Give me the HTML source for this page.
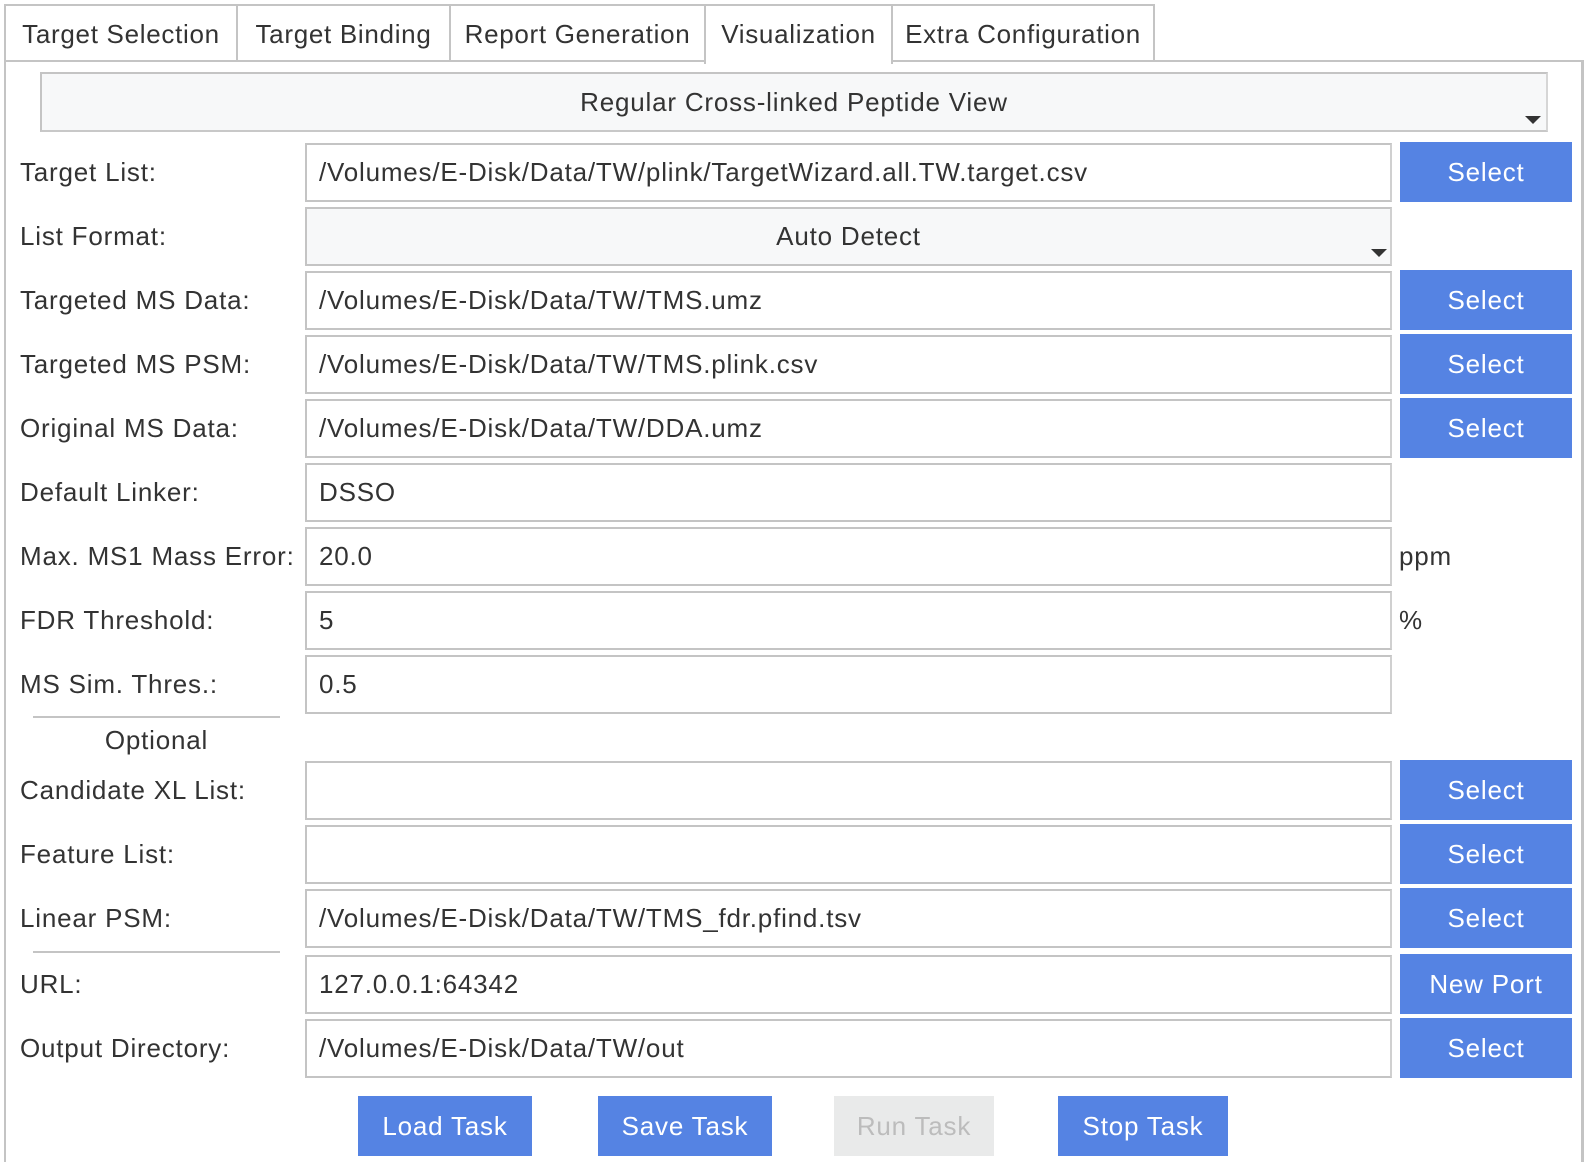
<!DOCTYPE html>
<html style="width:1592px;height:1162px;overflow:hidden"><head><meta charset="utf-8"><style>
*{box-sizing:border-box;margin:0;padding:0}
body{width:1592px;height:1162px;background:#fff;position:relative;overflow:hidden;font-family:"Liberation Sans",Arial,sans-serif;color:#333;font-size:26px;letter-spacing:0.8px}
.a{position:absolute}
.tab{position:absolute;top:4px;height:58px;border:2px solid #c4c4c4;background:#fff;line-height:56px;text-align:center;font-size:26px;letter-spacing:0.7px}
.panel{position:absolute;left:4px;top:60px;width:1580px;height:1102px;border:2px solid #c4c4c4;border-right-width:3px;border-bottom:none}
.lbl{position:absolute;left:20px;height:58px;line-height:58px;white-space:nowrap}
.inp{position:absolute;left:305px;width:1087px;height:59px;border:2px solid #c4c4c4;border-right-color:#d0d0d0;line-height:55px;padding-left:12px;background:#fff;white-space:nowrap}
.btn{position:absolute;left:1400px;width:172px;height:60px;background:#5583e3;color:#fff;text-align:center;line-height:60px}
.bb{position:absolute;top:1096px;height:60px;background:#5583e3;color:#fff;text-align:center;line-height:60px}
.tri{position:absolute;width:0;height:0;border-left:8px solid transparent;border-right:8px solid transparent;border-top:8px solid #333}
.sep{position:absolute;left:33px;width:247px;height:2px;background:#c4c4c4}
</style></head><body>
<div class="panel"></div>
<div class="tab" style="left:4px;width:234px">Target Selection</div>
<div class="tab" style="left:236px;width:215px">Target Binding</div>
<div class="tab" style="left:449px;width:257px">Report Generation</div>
<div class="tab" style="left:891px;width:264px">Extra Configuration</div>
<div class="tab" style="left:704px;width:189px;height:60px;border-bottom:none">Visualization</div>

<div class="a" style="left:40px;top:72px;width:1508px;height:60px;background:#f7f8f9;border:2px solid #c4c4c4;border-right-color:#d6d6d6;border-bottom-color:#c8c8c8;text-align:center;line-height:56px">Regular Cross-linked Peptide View</div>
<div class="tri" style="left:1525px;top:116px"></div>

<div class="lbl" style="top:143px">Target List:</div>
<div class="inp" style="top:143px">/Volumes/E-Disk/Data/TW/plink/TargetWizard.all.TW.target.csv</div>
<div class="btn" style="top:142px">Select</div>

<div class="lbl" style="top:207px">List Format:</div>
<div class="inp" style="top:207px;background:#f7f8f9;text-align:center;padding-left:0">Auto Detect</div>
<div class="tri" style="left:1371px;top:249px"></div>

<div class="lbl" style="top:271px">Targeted MS Data:</div>
<div class="inp" style="top:271px">/Volumes/E-Disk/Data/TW/TMS.umz</div>
<div class="btn" style="top:270px">Select</div>

<div class="lbl" style="top:335px">Targeted MS PSM:</div>
<div class="inp" style="top:335px">/Volumes/E-Disk/Data/TW/TMS.plink.csv</div>
<div class="btn" style="top:334px">Select</div>

<div class="lbl" style="top:399px">Original MS Data:</div>
<div class="inp" style="top:399px">/Volumes/E-Disk/Data/TW/DDA.umz</div>
<div class="btn" style="top:398px">Select</div>

<div class="lbl" style="top:463px">Default Linker:</div>
<div class="inp" style="top:463px">DSSO</div>

<div class="lbl" style="top:527px">Max. MS1 Mass Error:</div>
<div class="inp" style="top:527px">20.0</div>
<div class="lbl" style="top:527px;left:1399px">ppm</div>

<div class="lbl" style="top:591px">FDR Threshold:</div>
<div class="inp" style="top:591px">5</div>
<div class="lbl" style="top:591px;left:1399px">%</div>

<div class="lbl" style="top:655px">MS Sim. Thres.:</div>
<div class="inp" style="top:655px">0.5</div>

<div class="sep" style="top:716px"></div>
<div class="a" style="left:33px;width:247px;top:722px;text-align:center;line-height:36px">Optional</div>

<div class="lbl" style="top:761px">Candidate XL List:</div>
<div class="inp" style="top:761px"></div>
<div class="btn" style="top:760px">Select</div>

<div class="lbl" style="top:825px">Feature List:</div>
<div class="inp" style="top:825px"></div>
<div class="btn" style="top:824px">Select</div>

<div class="lbl" style="top:889px">Linear PSM:</div>
<div class="inp" style="top:889px">/Volumes/E-Disk/Data/TW/TMS_fdr.pfind.tsv</div>
<div class="btn" style="top:888px">Select</div>

<div class="sep" style="top:951px"></div>

<div class="lbl" style="top:955px">URL:</div>
<div class="inp" style="top:955px">127.0.0.1:64342</div>
<div class="btn" style="top:954px">New Port</div>

<div class="lbl" style="top:1019px">Output Directory:</div>
<div class="inp" style="top:1019px">/Volumes/E-Disk/Data/TW/out</div>
<div class="btn" style="top:1018px">Select</div>

<div class="bb" style="left:358px;width:174px">Load Task</div>
<div class="bb" style="left:598px;width:174px">Save Task</div>
<div class="bb" style="left:834px;width:160px;background:#e9eaea;color:#bcbcbc">Run Task</div>
<div class="bb" style="left:1058px;width:170px">Stop Task</div>
</body></html>
